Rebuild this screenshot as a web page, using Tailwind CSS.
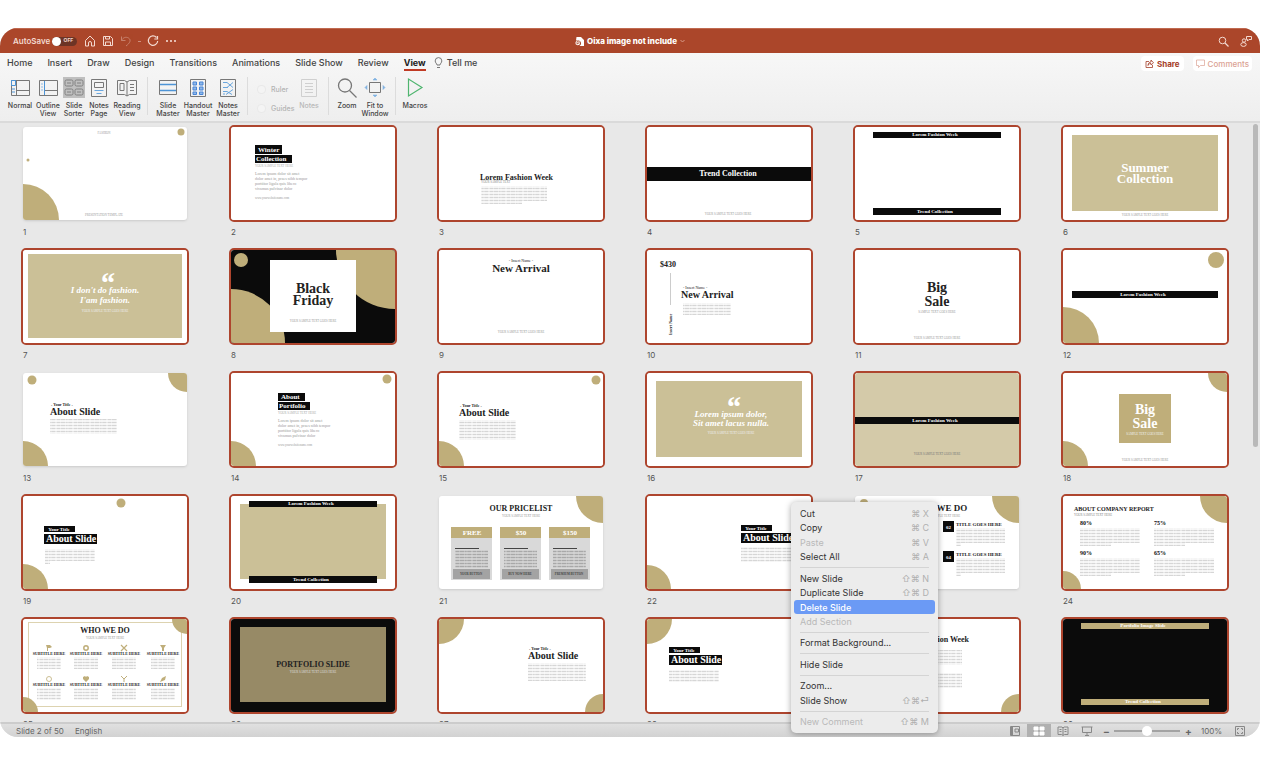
<!DOCTYPE html>
<html lang="en">
<head>
<meta charset="utf-8">
<meta name="viewport" content="width=device-width, initial-scale=1">
<title>Oixa image not include</title>
<script src="https://cdn.jsdelivr.net/npm/@tailwindcss/browser@4"></script>
</head>
<body class="bg-white font-['Inter',sans-serif] text-[#333]">
<div class="flex h-screen flex-col pt-7 pr-7 pb-[27px]">
<main class="relative flex min-h-0 flex-1 flex-col overflow-hidden rounded-[18px] bg-[#e8e8e8]">

  <!-- Title bar -->
  <header class="flex h-[25px] shrink-0 items-center border-t border-[#c06a50] bg-[#ab462a] px-[13px] text-[#f3d9d0]">
    <div class="flex flex-1 items-center">
      <label for="autosave" class="text-[8px] font-semibold">AutoSave</label>
      <input id="autosave" type="checkbox" class="peer sr-only">
      <label for="autosave" class="ml-[2px] flex h-[9px] w-[25px] items-center justify-between rounded-full bg-[#6d3425] pr-[4px] text-[5px] font-bold"><span class="size-[9px] rounded-full bg-white"></span>OFF</label>
      <div class="ml-[7px] flex items-center gap-[6px]">
        <button aria-label="Home"><svg class="size-3 fill-none stroke-current" viewBox="0 0 12 12"><path d="M1.500 5.500 6 1l4.500 4.500V11H7.500V8a1.500 1.500 0 0 0-3 0v3h-3z"/></svg></button>
        <button aria-label="Save"><svg class="size-3 fill-none stroke-current" viewBox="0 0 12 12"><path d="M1.500 1.500h7l2 2v7h-9zM3.500 1.500V4h4V1.500M3.500 10.500V7h5v3.500"/></svg></button>
        <button aria-label="Undo" class="opacity-40"><svg class="size-3 fill-none stroke-current" viewBox="0 0 12 12"><path d="M1.500 1.500v4h4M1.500 5.500C3 2.500 6 1.500 8.500 3c3 2 1.500 5-2.500 8"/></svg></button>
        <span class="h-px w-[3px] bg-current opacity-50"></span>
        <button aria-label="Redo"><svg class="size-3 fill-none stroke-current" viewBox="0 0 12 12"><path d="M9.500 2.500A4.700 4.700 0 1 0 10.700 6M10.500 1v3H7.300" stroke-width="1.200"/></svg></button>
        <button aria-label="More"><svg class="size-3 fill-current" viewBox="0 0 12 12"><circle cx="2" cy="6" r="1.100"/><circle cx="6" cy="6" r="1.100"/><circle cx="10" cy="6" r="1.100"/></svg></button>
      </div>
    </div>
    <h1 class="flex items-center gap-[3px] text-[8px] font-extrabold text-white">
      <svg class="size-[9px]" viewBox="0 0 9 9"><path d="M1.500 0H6l3 3v6H4.500A3 3 0 0 0 4 3.500H1z" fill="#fff"/><circle cx="2.700" cy="6" r="2.300" fill="#fff"/><path d="M2 7.500v-3h1a1 1 0 0 1 0 2H2" fill="none" stroke="#ab462a" stroke-width=".7"/></svg>
      Oixa image not include
      <svg class="h-1 w-[5px] fill-none stroke-[#d79a88]" viewBox="0 0 5 4"><path d="m.500 1 2 2 2-2"/></svg>
    </h1>
    <div class="flex flex-1 items-center justify-end gap-[11px]">
      <button aria-label="Search"><svg class="size-[11px] fill-none stroke-current" viewBox="0 0 11 11"><circle cx="4.500" cy="4.500" r="3.300"/><path d="m7 7 3.500 3.500" stroke-width="1.200"/></svg></button>
      <button aria-label="Presence" class="-mr-[5px]"><svg class="size-3 fill-none stroke-current" viewBox="0 0 12 12"><circle cx="4" cy="5.500" r="1.700"/><ellipse cx="3.500" cy="9.500" rx="2.700" ry="1.900"/><path d="M6.500 1.500h5v3H9L7.500 6V4.500h-1z"/></svg></button>
    </div>
  </header>

  <!-- Ribbon -->
  <div class="shrink-0 border-b-2 border-[#dadada] bg-linear-to-b from-[#f7f7f7] to-[#eeeeee]">
    <div class="flex h-[21px] items-start pr-2 pl-[7px]">
      <nav class="flex gap-[15px] pt-[3px] text-[9px] leading-[13px] font-medium text-[#444]">
        <a href="#">Home</a><a href="#">Insert</a><a href="#">Draw</a><a href="#">Design</a><a href="#">Transitions</a><a href="#">Animations</a><a href="#">Slide Show</a><a href="#">Review</a>
        <a href="#" aria-current="page" class="border-b-2 border-[#c03a24] font-bold text-[#222]">View</a>
      </nav>
      <button class="ml-[8px] flex items-center gap-1 pt-[3px] text-[9px] leading-[13px] font-medium text-[#444]">
        <svg class="h-[11px] w-[9px] fill-none stroke-[#777]" viewBox="0 0 9 11"><path d="M3 8C3 6.500 1.200 6 1.200 3.900a3.300 3.300 0 0 1 6.600 0C7.800 6 6 6.500 6 8zM3 10.500h3"/></svg>Tell me
      </button>
      <div class="ml-auto flex gap-[9px] pt-[3px] text-[8px] font-bold text-[#a5402a]">
        <button class="flex h-[15px] items-center gap-[3px] rounded-sm bg-white px-1"><svg class="size-[9px] fill-none stroke-current" viewBox="0 0 9 9"><path d="M4 2.500H1v6h6.500V6M3 6.500C3 4 4.500 3 6 3V1l2.500 2.800L6 6V4.500C4.500 4.500 3.500 5 3 6.500z" stroke-width=".8"/></svg>Share</button>
        <button disabled class="flex h-[15px] items-center gap-[3px] rounded-sm bg-white px-[3px] font-medium text-[#dba294]"><svg class="size-[9px] fill-none stroke-current" viewBox="0 0 9 9"><path d="M.500 1h8v5.500H4.500l-2 2v-2h-2z" stroke-width=".7"/></svg>Comments</button>
      </div>
    </div>
    <div class="flex h-[47px] items-start pt-[3px] pl-[6px] text-center text-[7px] leading-[8px] font-medium text-[#444] [&_button]:flex [&_button]:shrink-0 [&_button]:flex-col [&_button]:items-center [&_button]:gap-1 [&_svg]:h-[21px] [&_svg]:w-[22px] [&_svg]:fill-none">
      <button class="w-7"><svg viewBox="0 0 22 21" stroke="#777"><path d="M2.500 3.500h18v15h-18zM7.500 3.500v15M7.500 13.500h13"/><path d="M2.500 3.500h4v5h-4zM3 12h3M3 15h3" stroke="#4d94d6"/></svg>Normal</button>
      <button class="w-7"><svg viewBox="0 0 22 21" stroke="#777"><path d="M2.500 3.500h18v15h-18zM8 13.500h12"/><path d="M7.500 4v14" stroke="#4d94d6"/><path d="M4 7h2M4 10h2M4 13h2" stroke="#8fbbe3"/></svg>Outline<br>View</button>
      <button class="w-6" aria-pressed="true"><svg class="bg-[#bfbfbf]" viewBox="0 0 22 21" stroke="#808080"><rect x="2" y="3" width="8" height="6" rx="1.500"/><rect x="12" y="3" width="8" height="6" rx="1.500"/><rect x="2" y="12" width="8" height="6" rx="1.500"/><rect x="12" y="12" width="8" height="6" rx="1.500"/><path d="M4 6h4M14 6h4M4 15h4M14 15h4"/></svg>Slide<br>Sorter</button>
      <button class="w-[26px]"><svg viewBox="0 0 22 21" stroke="#777"><path d="M3.500 2.500h15v17h-15zM6.500 5.500h9v5h-9z"/><path d="M6.500 13.500h9M8.500 16.500h5" stroke="#6aa6dd"/></svg>Notes<br>Page</button>
      <button class="w-[30px]"><svg viewBox="0 0 22 21" stroke="#777"><path d="M1.500 3.500h7L11 5l2.500-1.500h7v14h-7L11 19l-2.500-1.500h-7zM11 5v14M4 6.500h4v7H4zM14 7.500h4M14 10.500h4M14 13.500h4"/></svg>Reading<br>View</button>
      <span class="mx-[5px] h-[38px] w-px bg-[#dcdcdc]"></span>
      <button class="w-[30px]"><svg viewBox="0 0 22 21" stroke="#777"><path d="M2.500 3.500h17v14h-17z"/><path d="M3 7.500h16M3 13.500h16" stroke="#4d94d6" stroke-width="1.500"/></svg>Slide<br>Master</button>
      <button class="w-[30px]"><svg viewBox="0 0 22 21" stroke="#777"><path d="M3.500 2.500h15v17h-15z"/><path d="M6 5h3.500v3H6zM12.500 5H16v3h-3.500zM6 10h3.500v3H6zM12.500 10H16v3h-3.500zM6 15h3.500v2.500H6zM12.500 15H16v2.500h-3.500z" fill="#8fb8ea" stroke="#4a86d6"/></svg>Handout<br>Master</button>
      <button class="w-[30px]"><svg viewBox="0 0 22 21" stroke="#777"><path d="M3.500 2.500h15v17h-15z"/><path d="M6 5.500h4l6 5M10 10.500l6-5M6 10.500h5M6 14.500h4l5 3M9 17.500l7-5M6 17h2" stroke="#6aa6dd"/></svg>Notes<br>Master</button>
      <span class="ml-1 h-[38px] w-px bg-[#dcdcdc]"></span>
      <div class="ml-[9px] flex w-10 flex-col gap-[10px] pt-2 text-[#b3b3b3]">
        <label class="flex items-center gap-[5px]"><input type="checkbox" disabled class="size-[9px] appearance-none rounded-sm border border-[#e9e9e9] bg-[#f4f4f4]">Ruler</label>
        <label class="flex items-center gap-[5px]"><input type="checkbox" disabled class="size-[9px] appearance-none rounded-sm border border-[#e9e9e9] bg-[#f4f4f4]">Guides</label>
      </div>
      <button disabled class="w-6 text-[#b8b8b8]"><svg viewBox="0 0 22 21" stroke="#cfcfcf"><path d="M3.500 2.500h15v17h-15zM7 6.500h8M7 9.500h8M7 12.500h8M7 15.500h8"/></svg>Notes</button>
      <span class="ml-[7px] h-[38px] w-px bg-[#dcdcdc]"></span>
      <button class="ml-1 w-7"><svg viewBox="0 0 22 21" stroke="#777" stroke-width="1.300"><circle cx="9" cy="8.500" r="6.500"/><path d="m13.500 13.500 7 7"/></svg>Zoom</button>
      <button class="w-7"><svg viewBox="0 0 22 21" stroke="#777"><path d="M5.500 5.500h11v10h-11z"/><path d="m9 3 2-2 2 2zM9 18l2 2 2-2zM3 8.500l-2 2 2 2zM19 8.500l2 2-2 2z" fill="#7fb2e2" stroke="#7fb2e2" stroke-width=".6"/></svg>Fit to<br>Window</button>
      <span class="ml-[6px] h-[38px] w-px bg-[#dcdcdc]"></span>
      <button class="ml-1 w-[30px]"><svg viewBox="0 0 22 21" stroke="#4fb56f" stroke-width="1.200"><path d="M4.500 2v17L18 10.500z"/></svg>Macros</button>
    </div>
  </div>

  <!-- Slide sorter -->
  <section class="relative min-h-0 flex-1 overflow-hidden pt-[2px] pr-[31px] pl-[21px]" aria-label="Slides">
    <ol id="slides" class="grid grid-cols-6 gap-x-10 [&_svg]:font-['Liberation_Serif',serif]"></ol>
    <div class="absolute top-px right-[2px] h-[54%] w-[5px] rounded-full bg-[#b9b9b9]"></div>
  </section>

  <!-- Status bar -->
  <footer class="flex h-[15px] shrink-0 items-center border-t-2 border-[#cccccc] bg-linear-to-b from-[#e0e0e0] to-[#d2d2d2] pr-2 pl-4 text-[8px] text-[#666] [&_button]:flex [&_button]:h-[13px] [&_button]:w-6 [&_button]:items-center [&_button]:justify-center [&_svg]:h-[10px] [&_svg]:w-3 [&_svg]:fill-none [&_svg]:stroke-[#888]">
    <span>Slide 2 of 50</span><span class="ml-[11px]">English</span>
    <div class="ml-auto flex items-center">
      <button aria-label="Normal view"><svg viewBox="0 0 12 10"><path d="M1.500.500h9v9h-9zM6 3h3.500v3H6z"/><path d="M3 1v8" stroke-width="2"/></svg></button>
      <button aria-label="Slide sorter" class="bg-[#b0b0b0]"><svg viewBox="0 0 12 10"><path d="M1 1h4v3H1zM7 1h4v3H7zM1 6h4v3H1zM7 6h4v3H7z" fill="#fff" stroke="#fff"/></svg></button>
      <button aria-label="Reading view"><svg viewBox="0 0 12 10"><path d="M1 1h4l1 1 1-1h4v7.500H7.500L6 9.500l-1.500-1H1zM6 2v7M2.500 3.500h2M2.500 5.500h2M7.500 3.500h2M7.500 5.500h2"/></svg></button>
      <button aria-label="Slide show"><svg viewBox="0 0 12 10"><path d="M.500 1h11M1.500 1v5.500h9V1M6 6.500v3M4 9.500h4"/></svg></button>
      <span class="ml-1 w-[8px] text-[10px] leading-none font-bold">−</span>
      <input type="range" aria-label="Zoom" min="0" max="100" value="50" class="mx-[3px] h-[10px] w-[66px] appearance-none bg-[linear-gradient(#a3a3a3,#a3a3a3)] bg-[length:100%_2px] bg-center bg-no-repeat [&::-webkit-slider-thumb]:size-[10px] [&::-webkit-slider-thumb]:appearance-none [&::-webkit-slider-thumb]:rounded-full [&::-webkit-slider-thumb]:bg-white">
      <span class="w-[10px] pl-[2px] text-[10px] leading-none font-bold">+</span>
      <span class="ml-2 w-6">100%</span>
      <button aria-label="Fit to window" class="ml-[3px]"><svg viewBox="0 0 12 10"><path d="M1.500.500h9v9h-9zM3.500 4V2.500H5M7 2.500h1.500V4M8.500 6v1.500H7M5 7.500H3.500V6"/></svg></button>
    </div>
  </footer>

  <!-- Context menu -->
  <div role="menu" class="absolute bottom-1 left-[791px] flex h-[231px] w-[147px] flex-col rounded-[5px] bg-[#ececec] px-[3px] py-1 text-[9px] leading-none shadow-[0_1px_6px_rgba(0,0,0,0.35)] [&_button]:flex [&_button]:flex-1 [&_button]:items-center [&_button]:justify-between [&_button]:rounded-[3px] [&_button]:px-[6px] [&_button:disabled]:text-[#b9b9b9] [&_hr]:mx-[6px] [&_hr]:my-[3px] [&_hr]:border-[#d4d4d4] [&_kbd]:font-['Inter','DejaVu_Sans',sans-serif] [&_kbd]:text-[#b0b0b0]">
    <button role="menuitem">Cut<kbd>⌘ X</kbd></button>
    <button role="menuitem">Copy<kbd>⌘ C</kbd></button>
    <button role="menuitem" disabled>Paste<kbd>⌘ V</kbd></button>
    <button role="menuitem">Select All<kbd>⌘ A</kbd></button>
    <hr>
    <button role="menuitem">New Slide<kbd>⇧⌘ N</kbd></button>
    <button role="menuitem">Duplicate Slide<kbd>⇧⌘ D</kbd></button>
    <button role="menuitem" class="bg-[#6b9af5] font-medium text-white">Delete Slide</button>
    <button role="menuitem" disabled>Add Section</button>
    <hr>
    <button role="menuitem">Format Background...</button>
    <hr>
    <button role="menuitem">Hide Slide</button>
    <hr>
    <button role="menuitem">Zoom...</button>
    <button role="menuitem">Slide Show<kbd>⇧⌘⏎</kbd></button>
    <hr>
    <button role="menuitem" disabled>New Comment<kbd>⇧⌘ M</kbd></button>
  </div>
</main>
</div>

<svg class="absolute size-0" aria-hidden="true">
  <defs>
    <pattern id="para" width="17" height="3" patternUnits="userSpaceOnUse"><path d="M0 1.500h17" stroke="#d6d6d6" stroke-width="1.400" stroke-dasharray="3 .4 5 .4 2 .4 4 .4 1"/></pattern>
    <pattern id="ink" width="17" height="3" patternUnits="userSpaceOnUse"><path d="M0 1.500h17" stroke="#a8a8a8" stroke-width="1.400" stroke-dasharray="3 .4 5 .4 2 .4 4 .4 1"/></pattern>
  </defs>
</svg>

<script>
/* Slides are drawn on a 164 x 93 canvas. */
const GOLD = '#bfae7a', SAND = '#cbc097', INK = '#0b0b0b';
const rect = (x, y, w, h, fill) => `<rect x="${x}" y="${y}" width="${w}" height="${h}" fill="${fill}"/>`;
const dot = (x, y, r) => `<circle cx="${x}" cy="${y}" r="${r}" fill="${GOLD}"/>`;
const text = (s, x, y, size, o = {}) => `<text x="${x}" y="${y}" font-size="${size}" fill="${o.fill || '#222'}" text-anchor="${o.at || 'middle'}" font-weight="${o.w || 700}" font-style="${o.st || 'normal'}">${s}</text>`;
const tiny = (s, x, y, fill = '#999', at = 'middle') => text(s, x, y, 3, { fill, at, w: 400 });
const para = (x, y, w, h) => rect(x, y, w, h, 'url(#para)');
const BL = r => dot(0, 93, r), TR = r => dot(164, 0, r), TL = r => dot(0, 0, r), BR = r => dot(164, 93, r);
const bar = (s, x, y, w, h, fill = INK, c = '#fff') => rect(x, y, w, h, fill) + text(s, 80, y + h - 2, 5, { fill: c });
const L = { at: 'start' }, W = { fill: '#fff' }, LW = { at: 'start', fill: '#fff' };
const FOOT = 'YOUR SAMPLE TEXT GOES HERE';
const list = (x, y) => tiny('YOUR SAMPLE TEXT HERE', x, y, '#aaa', 'start')
  + ['Lorem ipsum dolor sit amet', 'dolor amet in, praes nibh tempor', 'porttitor ligula quis libero', 'vivamus pulvinar dolor'].map((s, i) => text(s, x, y + 8 + i * 5, 4, { at: 'start', fill: '#999', w: 400 })).join('')
  + tiny('www.yourwebsitename.com', x, y + 32, '#999', 'start');
const tag = (x, y) => rect(x, y, 31, 6, INK) + text('Your Title', x + 15, y + 5, 5, W) + rect(x, y + 8, 53, 10, INK) + text('About Slide', x + 2, y + 16, 10, LW);
const about = (x, y, w, h) => text('- Your Title -', x + 1, y - 9, 4, L) + text('About Slide', x, y, 10, L) + para(x, y + 4, w, h);
const arrival = 'New Arrival';
const card = (x, name, foot) => rect(x, 31, 41, 53, '#d9d9d9') + rect(x, 31, 41, 11, GOLD) + text(name, x + 21, 39, 7, W)
  + rect(x + 4, 52, 24, 1, '#444') + rect(x + 4, 54, 33, 18, 'url(#ink)') + rect(x + 2, 73, 37, 10, '#a3a3a3') + text(foot, x + 20, 79, 3, { fill: '#444' });
const stat = (n, x, y) => text(n, x, y, 6, { at: 'start', fill: '#111' }) + para(x, y + 3, 60, 15) + para(x, y + 18, 31, 3);
const item = (n, y) => rect(88, y, 11, 11, INK) + text(n, 93.5, y + 8, 5, W) + text('TITLE GOES HERE', 101, y + 5, 5, L) + para(101, y + 7, 49, 15) + para(101, y + 22, 5, 3);
const icons = [
  '<path d="M-3-3h4l2 2-2 1h-2v3h-1v-3z"/>', '<circle r="2.200" fill="none" stroke="#bfae7a" stroke-width="1.500"/>', '<path d="m-3-3 6 6m0-6-6 6" stroke="#bfae7a" stroke-width="1.200"/>', '<path d="M-3-3h6L1 0v3h-2V0z"/>',
  '<circle r="2.500" fill="none" stroke="#bfae7a" stroke-width=".8"/>', '<path d="M0 3-3 0v-2l2-1 1 1 1-1 2 1v2z"/>', '<path d="m-3-3 3 3 3-3M0 0v3" fill="none" stroke="#bfae7a"/>', '<path d="m-3 3 2-4 4-2-1 4z"/>'];
const services = icons.map((d, i) => {
  const x = [26, 63, 101, 140][i % 4], y = i < 4 ? 29 : 60;
  return `<g transform="translate(${x} ${y})" fill="${GOLD}">${d}</g>` + text('SUBTITLE HERE', x, y + 7, 4) + para(x - 12, y + 9, 24, 12);
}).join('');

const slides = [
  [0, tiny('FASHION', 81, 7) + dot(158, 5, 3.5) + dot(5, 33, 1.5) + BL(36) + tiny('PRESENTATION TEMPLATE', 81, 89)],
  [1, rect(24, 18, 27, 9, INK) + rect(24, 28, 37, 8, INK) + text('Winter', 27, 25, 7, LW) + text('Collection', 25, 34, 7, LW) + list(24, 40)],
  [1, text('Lorem Fashion Week', 41, 53, 8, L) + tiny('YOUR SAMPLE TEXT', 42, 56, '#888', 'start') + para(42, 59, 66, 15) + para(42, 74, 41, 3)],
  [1, rect(0, 40, 164, 14, INK) + text('Trend Collection', 81, 49, 8, W) + tiny(FOOT, 81, 88)],
  [1, bar('Lorem Fashion Week', 18, 5, 128, 6) + bar('Trend Collection', 18, 81, 128, 7)],
  [1, rect(9, 8, 146, 76, SAND) + text('Summer', 82, 45, 13, W) + text('Collection', 82, 56, 13, W) + tiny(FOOT, 82, 89)],
  [1, rect(5, 4, 154, 84, SAND) + text('“', 84, 43, 30, { fill: '#fff', st: 'italic' }) + text("I don't do fashion.", 82, 43, 9, { fill: '#fff', st: 'italic' }) + text("I'am fashion.", 82, 53, 9, { fill: '#fff', st: 'italic' }) + tiny(FOOT, 82, 62, '#eee')],
  [1, rect(0, 0, 164, 93, INK) + dot(10, 10, 7) + BL(54) + TR(59) + rect(39, 10, 86, 72, '#fff') + text('Black', 82, 43, 14) + text('Friday', 82, 55, 14) + tiny(FOOT, 82, 72)],
  [1, text('- Insert Name -', 82, 12, 4, { w: 400 }) + text(arrival, 82, 22, 11) + tiny(FOOT, 82, 83)],
  [1, text('$430', 13, 17, 8, L) + rect(23, 23, 1, 32, '#ccc') + `<g transform="rotate(-90 25 85)">${text('Insert Name', 25, 85, 4, L)}</g>` + text('- Insert Name -', 36, 39, 4, { at: 'start', w: 400 }) + text(arrival, 34, 48, 10, L) + para(36, 53, 48, 12)],
  [1, text('Big', 82, 42, 14) + text('Sale', 82, 56, 14) + tiny('SAMPLE TEXT GOES HERE', 82, 63) + tiny(FOOT, 82, 89)],
  [1, dot(153, 10, 8) + BL(36) + bar('Lorem Fashion Week', 9, 41, 146, 7)],
  [0, dot(9, 7, 4.5) + TR(19) + BL(25) + about(27, 42, 67, 15)],
  [1, dot(156, 6, 4.5) + BL(25) + rect(47, 20, 27, 8, INK) + rect(47, 29, 32, 8, INK) + text('About', 50, 26, 7, LW) + text('Portfolio', 48, 35, 7, LW) + list(47, 41)],
  [1, dot(157, 7, 4.5) + BL(25) + about(20, 43, 57, 20)],
  [1, rect(9, 8, 146, 76, SAND) + text('“', 86, 44, 30, { fill: '#fff', st: 'italic' }) + text('Lorem ipsum dolor,', 84, 44, 9, { fill: '#fff', st: 'italic' }) + text('Sit amet lacus nulla.', 84, 53, 9, { fill: '#fff', st: 'italic' }) + tiny(FOOT, 84, 61, '#eee')],
  [1, rect(0, 0, 164, 93, '#d4caa9') + bar('Lorem Fashion Week', 0, 44, 164, 7) + tiny(FOOT, 82, 82, '#777')],
  [1, TR(19) + BL(25) + rect(56, 21, 52, 49, GOLD) + text('Big', 82, 41, 14, W) + text('Sale', 82, 55, 14, W) + tiny('SAMPLE TEXT GOES HERE', 82, 62, '#eee') + tiny(FOOT, 82, 88)],
  [1, dot(98, 7, 4.5) + BL(25) + tag(21, 30) + para(22, 53, 50, 12) + para(22, 65, 5, 3)],
  [1, rect(9, 8, 146, 75, SAND) + bar('Lorem Fashion Week', 18, 5, 128, 6) + bar('Trend Collection', 18, 80, 128, 7)],
  [0, TR(27) + text('OUR PRICELIST', 82, 15, 8) + tiny('YOUR SAMPLE TEXT HERE', 82, 21) + card(12, 'FREE', 'YOUR BUTTON') + card(61, '$50', 'BUY NOW HERE') + card(110, '$150', 'PREMIUM BUTTON')],
  [1, BL(24) + tag(94, 29) + para(94, 51, 53, 15)],
  [0, dot(9, 7, 4) + TR(27) + text('WHAT WE DO', 82, 15, 9) + tiny('YOUR SAMPLE TEXT HERE', 86, 21) + item('02', 25) + item('04', 55)],
  [1, TR(27) + BL(18) + text('ABOUT COMPANY REPORT', 11, 15, 6, L) + tiny('YOUR SAMPLE TEXT HERE', 11, 20, '#888', 'start') + stat('80%', 17, 29) + stat('75%', 91, 29) + stat('90%', 17, 59) + stat('65%', 91, 59)],
  [1, '<rect x="5.500" y="3.500" width="153" height="84" fill="none" stroke="#ddd3b0"/>' + TR(15) + BL(15) + text('WHO WE DO', 82, 14, 8) + tiny('YOUR SAMPLE TEXT HERE', 82, 20) + services],
  [1, rect(0, 0, 164, 93, INK) + rect(9, 8, 146, 75, '#978a66') + text('PORTFOLIO SLIDE', 82, 48, 8) + tiny(FOOT, 82, 54, '#ddd')],
  [1, TL(25) + BR(18) + about(89, 40, 58, 18)],
  [1, TL(25) + tag(22, 28) + para(22, 51, 50, 12)],
  [1, BR(18) + text('Lorem Fashion Week', 41, 23, 8, L) + para(42, 31, 65, 15) + para(42, 54, 65, 15)],
  [1, rect(0, 0, 164, 93, INK) + bar('Portfolio Image Slide', 18, 4, 128, 6, GOLD) + bar('Trend Collection', 18, 80, 128, 6, GOLD)]
];

document.getElementById('slides').innerHTML = slides.map(([selected, art], i) => `
  <li>
    <button aria-label="Slide ${i + 1}" aria-pressed="${!!selected}" class="${selected ? 'block w-full rounded-[5px] border-2 border-[#ae452e]' : 'block w-full rounded-[5px] border-2 border-transparent'}">
      <svg viewBox="0 0 164 93" class="${selected ? 'block w-full rounded-[3px] bg-white' : 'block w-full rounded-[3px] bg-white shadow-sm'}">${art}</svg>
    </button>
    <span class="block h-[26px] pl-[2px] text-[8px] leading-5 text-[#555]">${i + 1}</span>
  </li>`).join('');
</script>
</body>
</html>
